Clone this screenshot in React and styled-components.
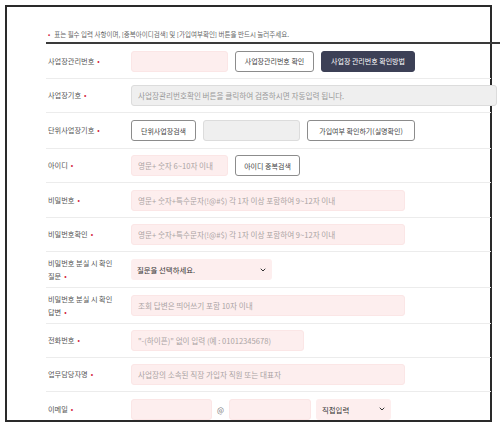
import styled, { createGlobalStyle } from "styled-components";
import { ChevronDown } from "lucide-react";

const GlobalStyle = createGlobalStyle`
  html, body { margin: 0; padding: 0; background: #fff; }
  body { font-family: "Noto Sans CJK KR", "Noto Sans", sans-serif; }
  * { box-sizing: border-box; }
`;

const Frame = styled.div`
  margin: 5px 0 0 5px;
  width: 487px;
  height: 417px;
  border: 2px solid #2a2a2a;
  overflow-x: visible;
  overflow-y: clip;
`;

const Content = styled.div`
  margin-left: 39px;
  width: 455px;
  padding-top: 22px;
`;

const Notice = styled.p`
  margin: 0 0 3px;
  padding-left: 2px;
  font-size: 6.5px;
  line-height: 10px;
  color: #666;
  white-space: nowrap;
`;

const Dot = styled.span`
  color: #d4283f;
  margin: 0 ${(p) => (p.$lead ? "4px" : "0")} 0 ${(p) => (p.$lead ? "0" : "3px")};
`;

const Table = styled.div`
  border-top: 2px solid #3a3a3a;
`;

const Row = styled.div`
  display: flex;
  align-items: center;
  min-height: ${(p) => p.$h || 34}px;
  margin-right: 10px;
  border-bottom: 1px solid #ececec;
`;

const Label = styled.div`
  width: 85px;
  flex-shrink: 0;
  padding-left: 2px;
  font-size: 7.2px;
  line-height: 13px;
  color: #555;
`;

const Field = styled.div`
  display: flex;
  align-items: center;
  gap: ${(p) => p.$gap || 7}px;
`;

const Input = styled.input`
  width: ${(p) => p.$w}px;
  height: 21px;
  padding: 0 6px;
  border: 1px solid #fbe6e6;
  border-radius: 3px;
  background: #fdeeee;
  font-family: inherit;
  font-size: 7.6px;
  color: #555;
  outline: none;
  &::placeholder { color: #aba4a4; }
`;

const Locked = styled.div`
  width: ${(p) => p.$w}px;
  height: 21px;
  padding: 0 6px;
  display: flex;
  align-items: center;
  border: 1px solid #dcdcdc;
  border-radius: 3px;
  background: #efefef;
  font-size: 7.6px;
  color: #999;
  flex-shrink: 0;
`;

const Button = styled.button`
  width: ${(p) => p.$w}px;
  height: 21px;
  padding: 0;
  border: 1px solid ${(p) => (p.$dark ? "#3c4056" : "#8c8c8c")};
  border-radius: 3px;
  background: ${(p) => (p.$dark ? "#3c4056" : "#fff")};
  color: ${(p) => (p.$dark ? "#fff" : "#444")};
  font-family: inherit;
  font-size: 7px;
  white-space: nowrap;
`;

const Select = styled.div`
  width: ${(p) => p.$w}px;
  height: 21px;
  padding: 0 5px 0 6px;
  display: flex;
  align-items: center;
  justify-content: space-between;
  border-radius: 3px;
  background: #fdeeee;
  font-size: 7.4px;
  color: #333;
`;

const At = styled.span`
  font-size: 7.4px;
  color: #777;
`;

const Req = ({ children }) => (
  <Label>
    {children}
    <Dot>•</Dot>
  </Label>
);

export default function App() {
  return (
    <>
      <GlobalStyle />
      <Frame>
        <Content>
          <Notice>
            <Dot $lead>•</Dot>
            표는 필수 입력 사항이며, [중복아이디검색] 및 [가입여부확인] 버튼을 반드시 눌러주세요.
          </Notice>
          <Table>
            <Row $h={35}>
              <Req>사업장관리번호</Req>
              <Field>
                <Input $w={97} />
                <Button $w={79}>사업장관리번호 확인</Button>
                <Button $w={94} $dark>사업장 관리번호 확인방법</Button>
              </Field>
            </Row>
            <Row>
              <Req>사업장기호</Req>
              <Locked $w={366}>사업장관리번호확인 버튼을 클릭하여 검증하시면 자동입력 됩니다.</Locked>
            </Row>
            <Row $h={36}>
              <Req>단위사업장기호</Req>
              <Field>
                <Button $w={65}>단위사업장검색</Button>
                <Locked $w={97} />
                <Button $w={108}>가입여부 확인하기(실명확인)</Button>
              </Field>
            </Row>
            <Row>
              <Req>아이디</Req>
              <Field>
                <Input $w={97} placeholder="영문+ 숫자 6~10자 이내" />
                <Button $w={65}>아이디 중복검색</Button>
              </Field>
            </Row>
            <Row $h={35}>
              <Req>비밀번호</Req>
              <Input $w={274} placeholder="영문+ 숫자+특수문자(!@#$) 각 1자 이상 포함하여 9~12자 이내" />
            </Row>
            <Row>
              <Req>비밀번호확인</Req>
              <Input $w={274} placeholder="영문+ 숫자+특수문자(!@#$) 각 1자 이상 포함하여 9~12자 이내" />
            </Row>
            <Row $h={36}>
              <Req>
                비밀번호 분실 시 확인
                <br />
                질문
              </Req>
              <Select $w={141}>
                질문을 선택하세요.
                <ChevronDown size={8} strokeWidth={3} color="#333" />
              </Select>
            </Row>
            <Row $h={36}>
              <Req>
                비밀번호 분실 시 확인
                <br />
                답변
              </Req>
              <Input $w={274} placeholder="조회 답변은 띄어쓰기 포함 10자 이내" />
            </Row>
            <Row>
              <Req>전화번호</Req>
              <Input $w={173} placeholder={'"-(하이픈)" 없이 입력 (예 : 01012345678)'} />
            </Row>
            <Row>
              <Req>업무담당자명</Req>
              <Input $w={274} placeholder="사업장의 소속된 직장 가입자 직원 또는 대표자" />
            </Row>
            <Row $h={35}>
              <Req>이메일</Req>
              <Field $gap={5}>
                <Input $w={81} />
                <At>@</At>
                <Input $w={82} />
                <Select $w={75}>
                  직접입력
                  <ChevronDown size={8} strokeWidth={3} color="#333" />
                </Select>
              </Field>
            </Row>
          </Table>
        </Content>
      </Frame>
    </>
  );
}
